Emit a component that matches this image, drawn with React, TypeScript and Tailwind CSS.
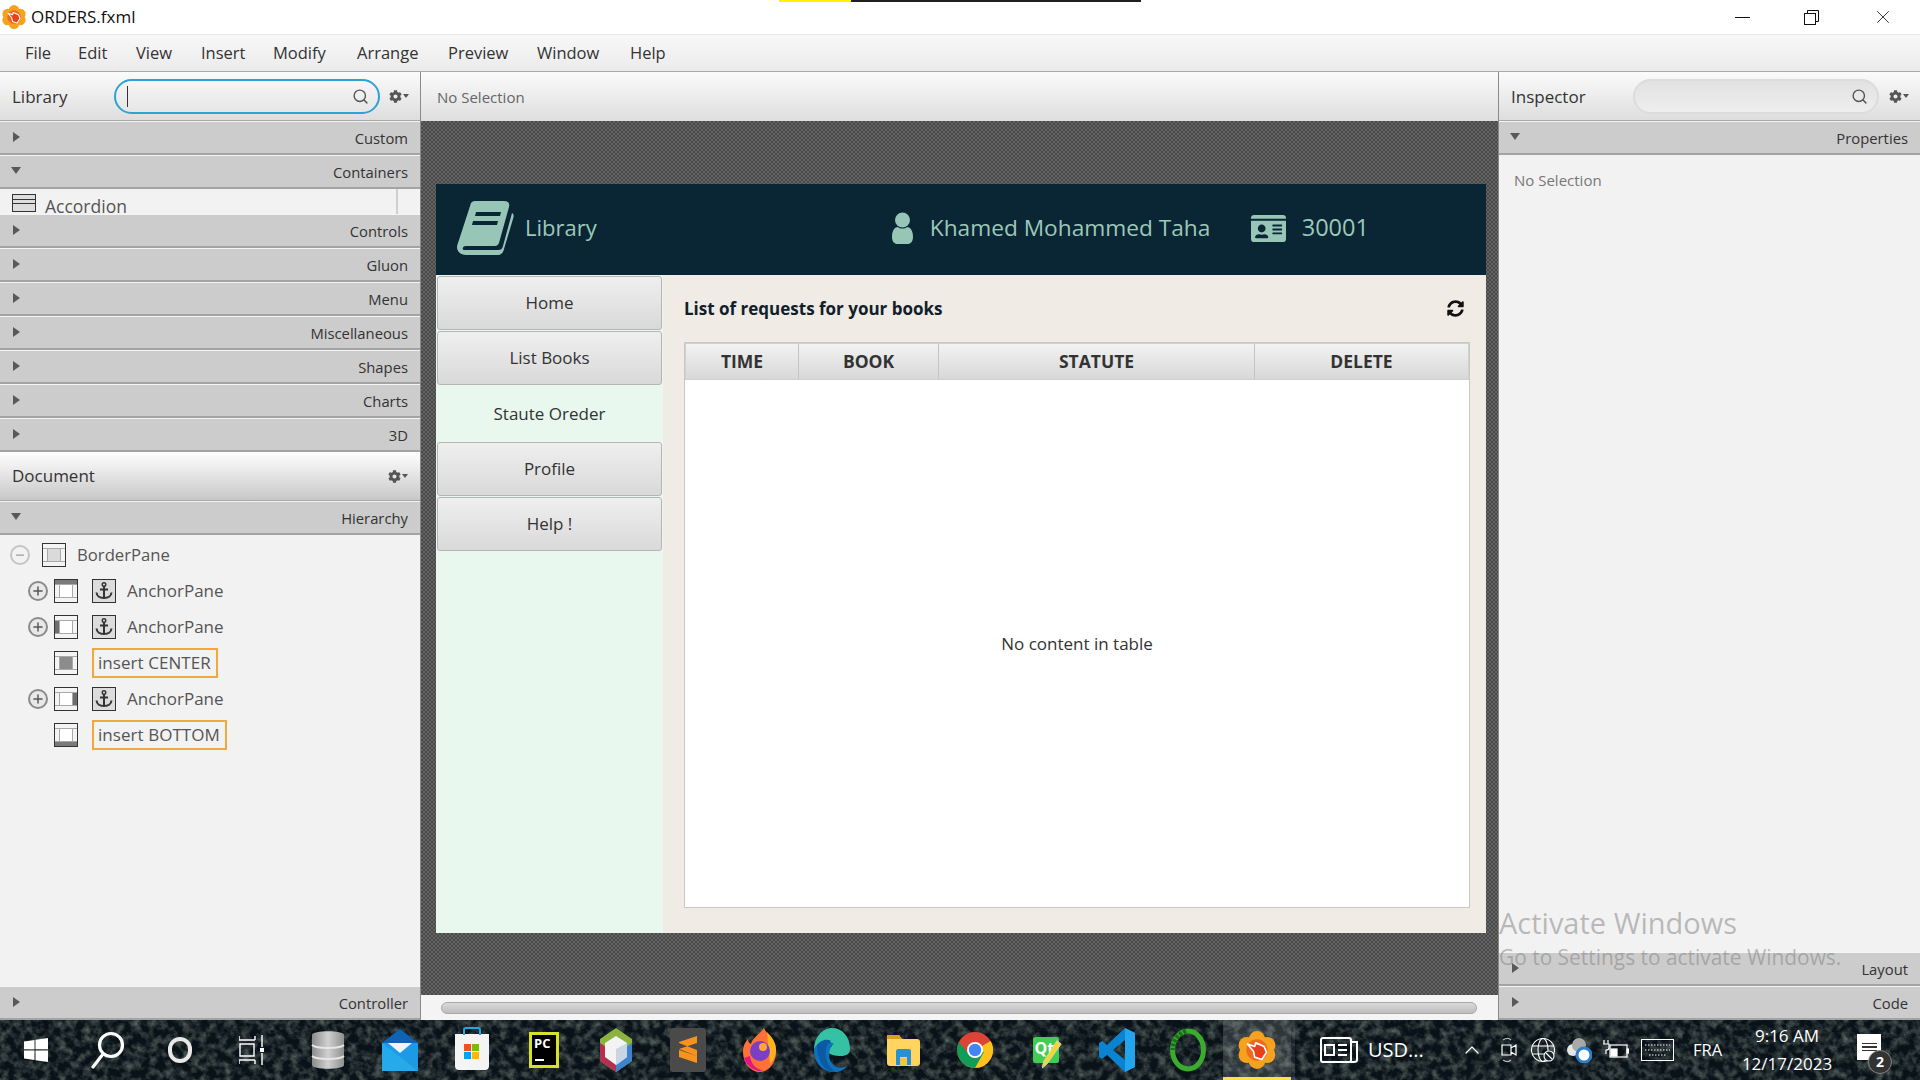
import React from 'react';
import { FaCog, FaIdCard, FaSyncAlt } from 'react-icons/fa';
import { Search, Minus, Plus, X, ChevronUp } from 'lucide-react';

const menuItems = [
  { label: 'File', cls: 'ml-[25px] w-[53px]' },
  { label: 'Edit', cls: 'w-[58px]' },
  { label: 'View', cls: 'w-[65px]' },
  { label: 'Insert', cls: 'w-[72px]' },
  { label: 'Modify', cls: 'w-[84px]' },
  { label: 'Arrange', cls: 'w-[91px]' },
  { label: 'Preview', cls: 'w-[89px]' },
  { label: 'Window', cls: 'w-[93px]' },
  { label: 'Help', cls: 'w-[60px]' },
];

const GearMenu = () => (
  <span className="flex items-center text-[#555]">
    <FaCog className="w-[13px] h-[13px]" />
    <span className="ml-[1px] w-0 h-0 border-x-[3px] border-x-transparent border-t-[4px] border-t-[#555]" />
  </span>
);

const Arrow = ({ open }: { open?: boolean }) =>
  open ? (
    <span className="block w-0 h-0 mt-[11px] ml-[11px] border-x-[5px] border-x-transparent border-t-[7px] border-t-[#595959]" />
  ) : (
    <span className="block w-0 h-0 mt-[10px] ml-[13px] border-y-[5px] border-y-transparent border-l-[7px] border-l-[#595959]" />
  );

const Section = ({ title, open }: { title: string; open?: boolean }) => (
  <div className="flex justify-between h-[34px] bg-[#cccccc] border-t border-t-[#f4f4f4] border-b-2 border-b-[#a3a3a3] pr-[12px] text-[14.8px] text-[#333] shrink-0">
    <Arrow open={open} />
    <span className="mt-[5px] leading-[22px]">{title}</span>
  </div>
);

const SearchBox = ({ focused }: { focused?: boolean }) => (
  <div className={`relative h-[35px] rounded-full bg-gradient-to-b flex items-center ${focused ? 'w-[266px] border-2 border-[#2ba3d6] from-[#f6f6f6] to-[#e6e6e6]' : 'w-[246px] border-2 border-[#dcdcdc] from-[#e2e2e2] to-[#eeeeee]'}`}>
    {focused && <span className="ml-[11px] w-[1px] h-[21px] bg-[#333]" />}
    <Search className="absolute right-[9px] top-[7px] w-[17px] h-[17px] text-[#555]" strokeWidth={2} />
  </div>
);

// border pane glyph, the darker region tells which slot it is
const PaneIcon = ({ slot }: { slot: 'all' | 'top' | 'left' | 'center' | 'right' | 'bottom' }) => (
  <svg width="24" height="24" viewBox="0 0 24 24" className="block shrink-0">
    <rect x="0.5" y="0.5" width="23" height="23" fill="#f4f4f4" stroke="#333" />
    {slot === 'top' && <rect x="1" y="1" width="22" height="4" fill="#7a7a7a" />}
    {slot === 'left' && <rect x="1" y="5" width="5" height="14" fill="#6e6e6e" />}
    {slot === 'right' && <rect x="18" y="5" width="5" height="14" fill="#6e6e6e" />}
    {slot === 'bottom' && <rect x="1" y="19" width="22" height="4" fill="#7a7a7a" />}
    <path d="M1 5.5H23M1 18.5H23M5.5 5.5V18.5M18.5 5.5V18.5" stroke="#a9a9a9" fill="none" />
    <rect x="6" y="6" width="12" height="12" fill={slot === 'center' ? '#8c8c8c' : slot === 'all' ? '#dadada' : '#ffffff'} />
  </svg>
);

const AnchorIcon = () => (
  <svg width="24" height="24" viewBox="0 0 24 24" className="block shrink-0">
    <rect x="0.5" y="0.5" width="23" height="23" fill="#dcdcdc" stroke="#333" />
    <circle cx="12" cy="5.5" r="1.8" fill="none" stroke="#333" strokeWidth="1.4" />
    <path d="M12 7V19M8 10.5H16" stroke="#333" strokeWidth="2" fill="none" />
    <path d="M4.5 13.5C5 17.5 8 19 12 19C16 19 19 17.5 19.5 13.5" stroke="#333" strokeWidth="2" fill="none" />
  </svg>
);

const TreeToggle = ({ open }: { open?: boolean }) => (
  <span className={`flex items-center justify-center w-[20px] h-[20px] rounded-full border-2 shrink-0 ${open ? 'border-[#c4c4c4] text-[#999]' : 'border-[#8a8a8a] text-[#555] bg-[#e8e8e8]'}`}>
    {open ? <Minus className="w-[12px] h-[12px]" strokeWidth={2.5} /> : <Plus className="w-[14px] h-[14px]" strokeWidth={2.5} />}
  </span>
);

const AnchorRow = ({ slot }: { slot: 'top' | 'left' | 'right' }) => (
  <div className="flex items-center h-[36px] pl-[28px]">
    <TreeToggle />
    <span className="ml-[6px]"><PaneIcon slot={slot} /></span>
    <span className="ml-[14px]"><AnchorIcon /></span>
    <span className="ml-[11px] text-[17px] text-[#555]">AnchorPane</span>
  </div>
);

const InsertRow = ({ slot, label }: { slot: 'center' | 'bottom'; label: string }) => (
  <div className="flex items-center h-[36px] pl-[54px]">
    <PaneIcon slot={slot} />
    <span className="ml-[14px] h-[30px] pl-[4px] pr-[5px] flex items-center border-2 border-[#f2a93b] text-[17px] tracking-[0.05px] text-[#555]">{label}</span>
  </div>
);

const FlowerLogo = ({ size }: { size: number }) => (
  <svg width={size} height={size} viewBox="0 0 32 32">
    <g fill="#f6a21e">
      <circle cx="16" cy="7" r="7" />
      <circle cx="16" cy="25" r="7" />
      <circle cx="7.5" cy="12" r="7" />
      <circle cx="24.5" cy="12" r="7" />
      <circle cx="7.5" cy="20" r="7" />
      <circle cx="24.5" cy="20" r="7" />
    </g>
    <circle cx="16" cy="16" r="9" fill="#ef6a1c" />
    <path d="M8 11L14 13L15 10L22 13L24 18L20 24L14 22L13 17Z" fill="#e8401c" stroke="#fff" strokeWidth="1.4" strokeLinejoin="round" />
  </svg>
);

const iconBox = 'w-[72px] h-full flex items-center justify-center shrink-0';
const narrowBox = 'w-[71px] h-full flex items-center justify-center shrink-0';

const TaskbarIcons = () => (
  <>
    <div className={iconBox}>
      <svg width="24" height="24" viewBox="0 0 24 24" fill="#fff"><path d="M0 3.5L10.5 2V11.3H0ZM11.5 1.8L24 0V11.3H11.5ZM0 12.5H10.5V22L0 20.5ZM11.5 12.5H24V24L11.5 22.2Z" /></svg>
    </div>
    <div className={iconBox}>
      <svg width="34" height="40" viewBox="0 0 34 40" fill="none" stroke="#fff" strokeWidth="3.2"><circle cx="20" cy="15" r="11.5" /><path d="M12 24L2 37" strokeLinecap="round" /></svg>
    </div>
    <div className={iconBox}><span className="w-[24px] h-[26px] rounded-full border-[4px] border-[#e8e8e8]" /></div>
    <div className="w-[76px] pr-[4px] h-full flex items-center justify-center shrink-0">
      <svg width="26" height="30" viewBox="0 0 26 30" fill="none" stroke="#fff" strokeWidth="1.4"><path d="M0 5H16M0 1V5M16 1V5M0 25H16M0 29V25M16 29V25M1 9H15V21H1ZM23 0V12M23 18V30" /><rect x="21" y="13" width="4" height="4" fill="#fff" stroke="none" /></svg>
    </div>
    <div className={iconBox}>
      <svg width="34" height="42" viewBox="0 0 34 42"><defs><linearGradient id="db" x1="0" x2="1"><stop offset="0" stopColor="#8b8b8b" /><stop offset="0.5" stopColor="#d0d0d0" /><stop offset="1" stopColor="#8f8f8f" /></linearGradient></defs><path d="M1 6C1 1 33 1 33 6V36C33 41 1 41 1 36Z" fill="url(#db)" /><path d="M1 16C6 20 28 20 33 16M1 27C6 31 28 31 33 27" stroke="#e6e6e6" strokeWidth="2" fill="none" /></svg>
    </div>
    <div className={iconBox}>
      <svg width="36" height="42" viewBox="0 0 36 42"><path d="M18 0L36 14H0Z" fill="#0f63b5" /><path d="M0 14H36V42H0Z" fill="#1c9be4" /><path d="M6 14H30L18 24Z" fill="#f2f2f2" /><path d="M0 14L36 42H0Z" fill="#2cb6f2" opacity="0.6" /></svg>
    </div>
    <div className={iconBox}>
      <div className="relative w-[34px] h-[36px] mt-[4px] rounded-b-[4px] bg-[#f4f4f4]">
        <span className="absolute -top-[7px] left-[8px] w-[18px] h-[8px] border-2 border-b-0 border-[#22a8e6] rounded-t-[3px]" />
        <span className="absolute left-[9px] top-[10px] grid grid-cols-2 gap-[1px]">
          <span className="w-[7px] h-[7px] bg-[#f25022]" />
          <span className="w-[7px] h-[7px] bg-[#7fba00]" />
          <span className="w-[7px] h-[7px] bg-[#00a4ef]" />
          <span className="w-[7px] h-[7px] bg-[#ffb900]" />
        </span>
      </div>
    </div>
    <div className={iconBox}>
      <div className="relative w-[30px] h-[36px] border-[3px] border-[#d7e02b] bg-black">
        <span className="absolute left-[2px] top-[1px] text-[13px] leading-[15px] font-bold text-white">PC</span>
        <span className="absolute left-[3px] bottom-[4px] w-[9px] h-[2px] bg-white" />
      </div>
    </div>
    <div className={iconBox}>
      <svg width="32" height="44" viewBox="0 0 32 44"><path d="M16 0L32 11V33L16 44L0 33V11Z" fill="#8cb33d" /><path d="M0 15L16 26V44L0 33Z" fill="#b3304f" /><path d="M32 15L16 26V44L32 33Z" fill="#3c84d0" /><path d="M16 8L27 15V29L16 37L5 29V15Z" fill="#f3f3f3" /><path d="M16 21L27 15V29L16 37Z" fill="#c9d6e2" /></svg>
    </div>
    <div className={iconBox}>
      <div className="w-[36px] h-[44px] rounded-[3px] bg-[#4a4a4a] flex items-center justify-center">
        <svg width="20" height="28" viewBox="0 0 20 28" fill="#f7921e"><path d="M19 0V7L1 13V6ZM1 14L19 20V27L1 21ZM1 13L19 20V14L1 7Z" /></svg>
      </div>
    </div>
    <div className={iconBox}>
      <svg width="34" height="44" viewBox="0 0 34 44"><path d="M21 0C23 6 32 10 33 22C34 34 26 44 17 44C8 44 0 36 0 24C0 17 3 13 5 11C5 14 6 15 8 16C10 9 16 7 21 0Z" fill="#ff7139" /><path d="M24 4C27 8 33 12 33 22C33 28 30 33 27 36Z" fill="#ffb11f" /><circle cx="17" cy="23" r="10" fill="#7a3fc4" /><circle cx="20" cy="19" r="4" fill="#ffa436" /><path d="M1 30C4 40 14 44 20 43C14 41 8 37 7 28Z" fill="#e31587" /></svg>
    </div>
    <div className={iconBox}>
      <svg width="36" height="44" viewBox="0 0 36 44"><path d="M18 0C28 0 36 8 36 21C36 26 32 28 27 28C22 28 14 27 14 23C14 19 18 20 18 17C18 14 12 11 8 14C3 17 0 21 0 22C0 10 8 0 18 0Z" fill="#35c1a4" /><path d="M0 22C0 34 8 44 20 44C26 44 30 42 33 38C26 41 20 40 17 34C13 27 16 18 20 16C12 11 0 16 0 22Z" fill="#1071bd" /><path d="M3 17C6 13 12 10 17 13C12 16 11 23 12 30C13 36 17 41 22 44C10 44 3 32 3 17Z" fill="#0c59a4" /></svg>
    </div>
    <div className={narrowBox}>
      <svg width="33" height="32" viewBox="0 0 33 32"><path d="M0 4C0 2 1 1 3 1H12L15 5H30C32 5 33 6 33 8V29C33 31 32 32 30 32H3C1 32 0 31 0 29Z" fill="#ffd45f" /><path d="M0 1H12L15 5H0Z" fill="#d9a21b" /><path d="M9 31V17C9 16 10 15 11 15H22C23 15 24 16 24 17V31H20V23H13V31Z" fill="#2a8fd8" /><rect x="13" y="24" width="7" height="8" fill="#f0c545" /></svg>
    </div>
    <div className={narrowBox}>
      <svg width="36" height="44" viewBox="0 0 36 36"><circle cx="18" cy="18" r="18" fill="#db4437" /><path d="M18 18L33.6 9A18 18 0 0 1 18 36L9 34Z" fill="#ffc21a" /><path d="M2 10A18 18 0 0 0 18 36L27 20L10 20Z" fill="#0f9d58" /><circle cx="18" cy="18" r="8" fill="#fff" /><circle cx="18" cy="18" r="6.2" fill="#4285f4" /></svg>
    </div>
    <div className={narrowBox}>
      <div className="relative w-[26px] h-[26px] rounded-[2px] bg-[#41cd52]">
        <span className="absolute left-[2px] top-[0px] text-[16px] leading-[22px] font-bold text-white">Qt</span>
        <svg className="absolute -right-[3px] top-[0px]" width="20" height="34" viewBox="0 0 24 36"><path d="M18 2L23 6L6 30L0 35L2 27Z" fill="#f7d52b" stroke="#d8d8d8" /></svg>
      </div>
    </div>
    <div className={narrowBox}>
      <svg width="36" height="44" viewBox="0 0 36 44"><path d="M26 0L36 5V39L26 44L8 27L3 31L0 29V15L3 13L8 17ZM26 12L14 22L26 32Z" fill="#0a84d0" /><path d="M26 0L36 5V39L26 44Z" fill="#22a5ec" /></svg>
    </div>
    <div className={narrowBox}>
      <svg width="36" height="44" viewBox="0 0 36 44" fill="none"><ellipse cx="18" cy="22" rx="15.5" ry="19" stroke="#39ac2d" strokeWidth="5" /><path d="M16 3C8 6 3 13 3 22" stroke="#1b6d1b" strokeWidth="5" strokeDasharray="3 1.5" /></svg>
    </div>
    <div className="relative w-[68px] h-full flex items-center justify-center shrink-0 bg-[#ffffff26]">
      <FlowerLogo size={38} />
      <span className="absolute bottom-0 left-0 right-0 h-[3px] bg-[#f4e34a]" />
    </div>
    <div className="w-[4px] h-full bg-[#ffffff14] shrink-0" />
  </>
);

const Tray = () => (
  <div className="ml-auto h-full flex items-center text-white">
    <svg width="38" height="28" viewBox="0 0 38 28" fill="none" stroke="#fff" strokeWidth="2"><rect x="1" y="2" width="30" height="24" rx="2" /><path d="M31 6H37V24C37 25 36 26 34 26H30" /><rect x="5" y="9" width="9" height="10" /><path d="M18 9H27M18 14H27M18 19H27" /></svg>
    <span className="ml-[10px] w-[92px] text-[20px]">USD...</span>
    <ChevronUp className="w-[24px] h-[24px]" strokeWidth={1.2} />
    <svg className="ml-[16px]" width="18" height="26" viewBox="0 0 18 26" fill="none" stroke="#fff" strokeWidth="1.2"><path d="M2 8H11V18H2ZM11 11L16 8V18L11 15" /><path d="M3 3C6 1 9 1 11 3M3 23C6 25 9 25 11 23" stroke="#bbb" /></svg>
    <svg className="ml-[13px]" width="24" height="26" viewBox="0 0 24 26" fill="none" stroke="#fff" strokeWidth="1.1"><circle cx="12" cy="13" r="11.5" /><ellipse cx="12" cy="13" rx="5" ry="11.5" /><path d="M1 9H23M1 17H23" /><circle cx="18" cy="19" r="5" fill="#18242a" /><path d="M15 16L21 22" /></svg>
    <svg className="ml-[11px]" width="26" height="26" viewBox="0 0 26 26"><circle cx="7" cy="13" r="6" fill="#e6e6e6" /><circle cx="13" cy="8" r="7" fill="#a8a8a8" /><circle cx="18" cy="18" r="7" fill="#fff" stroke="#2a7fd0" strokeWidth="3" /></svg>
    <svg className="ml-[11px]" width="26" height="22" viewBox="0 0 26 22" fill="none" stroke="#fff" strokeWidth="1.2"><rect x="7" y="6" width="17" height="12" /><rect x="8" y="10" width="6" height="7" fill="#fff" /><path d="M1 1V5M5 1V5M0 5H6V9C6 11 3 11 3 11V15" /><rect x="24" y="10" width="2" height="4" fill="#fff" /></svg>
    <svg className="ml-[12px]" width="33" height="22" viewBox="0 0 33 22" fill="none" stroke="#fff"><rect x="0.5" y="0.5" width="32" height="21" /><path d="M4 6H29M4 11H29M8 16H25" strokeDasharray="1.5 1.5" /></svg>
    <span className="ml-[19px] w-[34px] text-[16.5px]">FRA</span>
    <div className="ml-[8px] w-[104px] flex flex-col items-center text-[17px] leading-[28px]">
      <span>9:16 AM</span>
      <span>12/17/2023</span>
    </div>
    <div className="relative ml-[18px] mr-[39px] w-[24px] h-[26px] mb-[6px] bg-white flex flex-col gap-[2px] items-center justify-center">
      <span className="w-[15px] h-[1.5px] bg-[#333]" />
      <span className="w-[15px] h-[1.5px] bg-[#333]" />
      <span className="w-[15px] h-[1.5px] bg-[#333]" />
      <span className="absolute -right-[11px] -bottom-[14px] w-[24px] h-[24px] rounded-full bg-[#333] border border-[#888] text-[14px] font-bold leading-[22px] text-center">2</span>
    </div>
  </div>
);

const NavButton = ({ label }: { label: string }) => (
  <div className="h-[54px] mb-[1px] mx-[1px] flex items-center justify-center rounded-[3px] border border-[#b5b5b5] bg-gradient-to-b from-[#efefef] to-[#d9d9d9] text-[17px] text-[#333]">
    {label}
  </div>
);

const columns = [
  { label: 'TIME', cls: 'w-[113px]' },
  { label: 'BOOK', cls: 'w-[140px]' },
  { label: 'STATUTE', cls: 'w-[316px]' },
  { label: 'DELETE', cls: 'flex-1' },
];

const CanvasApp = () => (
  <div className="w-[1050px] h-[749px] flex flex-col bg-white">
    <div className="h-[91px] pb-[3px] flex items-center bg-[#0a2533] text-[#9cc9b9] shrink-0">
      <svg className="ml-[21px]" width="57" height="54" viewBox="0 0 57 54" fill="#98c6b6">
        <path d="M14 2C15 0.7 16 0 18 0H47C51 0 53 2 52 6L42 42C41 44 40 45 38 45H9C5 45 5 49 7 49H41C44 49 45 48 46 45L55 12C57 13 57 15 56 18L47 48C46 52 44 54 40 54H9C3 54 0 50 0 46C0 44 1 42 2 39ZM19 11L18 15H43L44 11ZM16 20L15 24H40L41 20Z" fillRule="evenodd" />
      </svg>
      <span className="ml-[11px] mb-[2px] text-[22px]">Library</span>
      <svg className="ml-[295px]" width="21" height="32" viewBox="0 0 21 32" fill="#98c6b6"><circle cx="10.5" cy="8" r="7.5" /><path d="M0 25C0 18 3 15 6 15C8 17 13 17 15 15C18 15 21 18 21 25C21 30 18 32 16 32H5C3 32 0 30 0 25Z" /></svg>
      <span className="ml-[17px] w-[321px] text-[22.7px]">Khamed Mohammed Taha</span>
      <FaIdCard className="w-[35px] h-[35px] text-[#98c6b6]" />
      <span className="ml-[16px] text-[23.5px]">30001</span>
    </div>
    <div className="flex-1 flex min-h-0">
      <div className="w-[227px] bg-[#e8f8ef] pt-[1px] shrink-0">
        <NavButton label="Home" />
        <NavButton label="List Books" />
        <div className="h-[56px] flex items-center justify-center text-[17px] text-[#333]">Staute Oreder</div>
        <NavButton label="Profile" />
        <NavButton label="Help !" />
      </div>
      <div className="flex-1 flex flex-col bg-[#f0ebe5] pl-[21px] pr-[16px] pb-[25px]">
        <div className="h-[67px] flex items-center justify-between shrink-0">
          <span className="text-[17px] font-bold text-[#10202a]">List of requests for your books</span>
          <FaSyncAlt className="mr-[6px] w-[17px] h-[17px] text-[#111]" />
        </div>
        <div className="flex-1 flex flex-col border border-[#c8c8c8] bg-white">
          <div className="flex h-[37px] border border-[#d0d0d0] shrink-0">
            {columns.map(col => (
              <div key={col.label} className={`flex items-center justify-center border-r border-[#c4c4c4] last:border-r-0 bg-gradient-to-b from-[#f2f2f2] to-[#d8d8d8] text-[17.5px] font-bold text-[#333] ${col.cls}`}>
                {col.label}
              </div>
            ))}
          </div>
          <div className="flex-1 flex items-center justify-center text-[17px] text-[#333]">No content in table</div>
        </div>
      </div>
    </div>
  </div>
);

export default function App() {
  return (
    <div className="relative w-[1920px] h-[1080px] overflow-hidden flex flex-col bg-[#f2f2f2] font-['Open_Sans',sans-serif]">
      {/* title bar */}
      <div className="relative h-[35px] flex items-center bg-white border-b border-[#e6e6e6] shrink-0">
        <span className="ml-[2px]"><FlowerLogo size={24} /></span>
        <span className="ml-[5px] text-[17px] text-[#111]">ORDERS.fxml</span>
        <span className="absolute top-0 left-[779px] w-[72px] h-[2px] bg-[#fff200]" />
        <span className="absolute top-0 left-[851px] w-[290px] h-[2px] bg-[#1e1e1e]" />
        <div className="ml-auto flex items-center text-[#111]">
          <span className="w-[15px] h-[1px] bg-[#111] mr-[54px]" />
          <svg className="mr-[53px]" width="15" height="15" viewBox="0 0 15 15" fill="none" stroke="#111"><rect x="0.5" y="3.5" width="11" height="11" /><path d="M3.5 3.5V0.5H14.5V11.5H11.5" /></svg>
          <X className="mr-[26px] w-[22px] h-[22px]" strokeWidth={0.9} />
        </div>
      </div>

      {/* menu bar */}
      <div className="h-[37px] flex items-center bg-gradient-to-b from-[#f8f8f8] to-[#ebebeb] border-b border-[#a8a8a8] text-[16.5px] text-[#333] shrink-0">
        {menuItems.map(item => (
          <span key={item.label} className={item.cls}>{item.label}</span>
        ))}
      </div>

      <div className="flex-1 flex min-h-0">
        {/* left column */}
        <div className="w-[421px] flex flex-col border-r border-[#8a8a8a] shrink-0">
          <div className="h-[49px] flex items-center bg-gradient-to-b from-[#fbfbfb] to-[#dedede] border-b border-[#a8a8a8] shrink-0">
            <span className="ml-[12px] mt-[2px] w-[102px] text-[17px] text-[#333]">Library</span>
            <SearchBox focused />
            <span className="ml-[9px]"><GearMenu /></span>
          </div>
          <Section title="Custom" />
          <Section title="Containers" open />
          <div className="relative h-[25px] overflow-hidden flex items-start bg-[#f2f2f2] shrink-0">
            <svg className="ml-[12px] mt-[5px]" width="24" height="18" viewBox="0 0 24 18" fill="#ddd" stroke="#333"><rect x="0.5" y="0.5" width="23" height="17" fill="#ddd" /><path d="M0 5.5H24M0 9.5H24" /></svg>
            <span className="ml-[9px] mt-[5px] text-[17.5px] leading-[24px] text-[#555]">Accordion</span>
            <span className="absolute left-[396px] top-0 bottom-0 w-[2px] bg-[#cfcfcf]" />
          </div>
          {['Controls', 'Gluon', 'Menu', 'Miscellaneous', 'Shapes', 'Charts', '3D'].map(title => (
            <Section key={title} title={title} />
          ))}
          <div className="h-[49px] flex items-center justify-between bg-gradient-to-b from-[#ffffff] to-[#c8c8c8] border-b border-[#a8a8a8] pl-[12px] pr-[12px] text-[17px] text-[#333] shrink-0">
            <span>Document</span>
            <GearMenu />
          </div>
          <Section title="Hierarchy" open />
          <div className="flex-1 pt-[2px] min-h-0">
            <div className="flex items-center h-[36px] pl-[10px]">
              <TreeToggle open />
              <span className="ml-[12px]"><PaneIcon slot="all" /></span>
              <span className="ml-[11px] text-[16.7px] text-[#555]">BorderPane</span>
            </div>
            <AnchorRow slot="top" />
            <AnchorRow slot="left" />
            <InsertRow slot="center" label="insert CENTER" />
            <AnchorRow slot="right" />
            <InsertRow slot="bottom" label="insert BOTTOM" />
          </div>
          <Section title="Controller" />
        </div>

        {/* center column */}
        <div className="flex-1 flex flex-col min-w-0">
          <div className="h-[49px] pt-[2px] flex items-center bg-gradient-to-b from-[#fbfbfb] to-[#dedede] pl-[16px] text-[15px] text-[#666] shrink-0">No Selection</div>
          <div className="flex-1 pt-[63px] pl-[15px] bg-[repeating-conic-gradient(#494949_0_25%,#636363_0_50%)] bg-[length:4px_4px] min-h-0">
            <CanvasApp />
          </div>
          <div className="h-[25px] flex items-center bg-[#f4f4f4] pl-[20px] pr-[21px] shrink-0">
            <div className="w-full h-[12px] rounded-full border border-[#a8a8a8] bg-gradient-to-b from-[#dadada] to-[#bdbdbd]" />
          </div>
        </div>

        {/* right column */}
        <div className="relative w-[422px] flex flex-col border-l border-[#8a8a8a] shrink-0">
          <div className="h-[49px] flex items-center bg-gradient-to-b from-[#fbfbfb] to-[#dedede] border-b border-[#a8a8a8] shrink-0">
            <span className="ml-[12px] mt-[2px] w-[122px] text-[17px] text-[#333]">Inspector</span>
            <SearchBox />
            <span className="ml-[10px]"><GearMenu /></span>
          </div>
          <Section title="Properties" open />
          <div className="flex-1 pt-[14px] pl-[15px] text-[15px] text-[#777] min-h-0">No Selection</div>
          <Section title="Layout" />
          <Section title="Code" />
          <div className="absolute left-0 top-[832px] text-[#7f7f7f]/50 pointer-events-none whitespace-nowrap">
            <div className="text-[29px] leading-[38px]">Activate Windows</div>
            <div className="text-[20.9px] leading-[31px]">Go to Settings to activate Windows.</div>
          </div>
        </div>
      </div>

      {/* taskbar */}
      <div className="relative h-[60px] flex items-center bg-[#0a1219] shrink-0 overflow-hidden">
        <svg className="absolute inset-0 w-full h-full" aria-hidden="true">
          <filter id="foliage">
            <feTurbulence type="fractalNoise" baseFrequency="0.12" numOctaves="4" seed="7" />
            <feColorMatrix values="0 0 0 0 0.2  0 0 0 0 0.27  0 0 0 0 0.22  1.3 0 0 0 -0.5" />
          </filter>
          <rect width="100%" height="100%" filter="url(#foliage)" />
        </svg>
        <div className="relative h-full w-full flex items-center">
          <TaskbarIcons />
          <Tray />
        </div>
      </div>
    </div>
  );
}
